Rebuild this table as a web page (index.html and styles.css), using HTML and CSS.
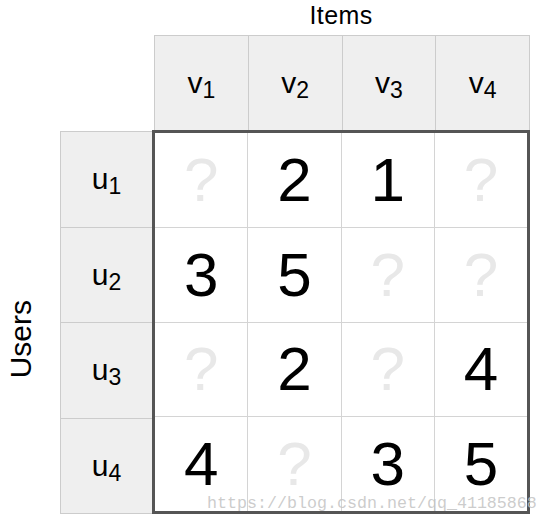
FILE: index.html
```html
<!DOCTYPE html>
<html>
<head>
<meta charset="utf-8">
<link rel="stylesheet" href="styles.css">
</head>
<body>
<div class="page">
  <div class="items-title">Items</div>
  <div class="col-heads">
    <div class="head"><span class="lbl">v<span class="sub">1</span></span></div>
    <div class="head"><span class="lbl">v<span class="sub">2</span></span></div>
    <div class="head"><span class="lbl">v<span class="sub">3</span></span></div>
    <div class="head"><span class="lbl">v<span class="sub">4</span></span></div>
  </div>
  <div class="users-area"><div class="users-title">Users</div></div>
  <div class="row-heads">
    <div class="rhead"><span class="lbl">u<span class="sub">1</span></span></div>
    <div class="rhead"><span class="lbl">u<span class="sub">2</span></span></div>
    <div class="rhead"><span class="lbl">u<span class="sub">3</span></span></div>
    <div class="rhead"><span class="lbl">u<span class="sub">4</span></span></div>
  </div>
  <div class="matrix">
    <div class="cell q">?</div><div class="cell">2</div><div class="cell">1</div><div class="cell q">?</div>
    <div class="cell">3</div><div class="cell">5</div><div class="cell q">?</div><div class="cell q">?</div>
    <div class="cell q">?</div><div class="cell">2</div><div class="cell q">?</div><div class="cell">4</div>
    <div class="cell">4</div><div class="cell q">?</div><div class="cell">3</div><div class="cell">5</div>
  </div>
</div>
<div class="watermark">https://blog.csdn.net/qq_41185868</div>
</body>
</html>
```
FILE: styles.css
```css
html, body {
  margin: 0;
  padding: 0;
  background: #ffffff;
}
body {
  width: 548px;
  height: 525px;
  position: relative;
  overflow: hidden;
  font-family: "Liberation Sans", Arial, sans-serif;
  color: #000;
}
.page {
  display: grid;
  grid-template-columns: 60px 92px 378px;
  grid-template-rows: 35px 95px 384px;
}
.items-title {
  grid-column: 3;
  grid-row: 1;
  text-align: center;
  font-size: 25px;
  line-height: 25px;
  margin-top: 3px;
  letter-spacing: 0.4px;
}
.col-heads {
  grid-column: 3;
  grid-row: 2;
  margin-left: 2px;
  display: grid;
  grid-template-columns: repeat(4, 1fr);
  border-top: 1px solid #cccccc;
  border-left: 1px solid #cccccc;
  background: #efefef;
}
.head {
  border-right: 1px solid #cccccc;
  display: flex;
  align-items: center;
  justify-content: center;
  font-size: 30px;
}
.lbl {
  display: block;
  line-height: 34px;
}
.sub {
  font-size: 23px;
  line-height: 0;
  vertical-align: -5px;
}
.users-area {
  grid-column: 1;
  grid-row: 3;
  display: flex;
  align-items: center;
  padding-left: 6px;
  padding-top: 34px;
}
.users-title {
  writing-mode: vertical-rl;
  transform: rotate(180deg);
  font-size: 30px;
  line-height: 30px;
}
.row-heads {
  grid-column: 2;
  grid-row: 3;
  margin-top: 1px;
  display: grid;
  grid-template-rows: repeat(4, 1fr);
  border-top: 1px solid #cccccc;
  border-left: 1px solid #cccccc;
  background: #efefef;
}
.rhead {
  border-bottom: 1px solid #cccccc;
  display: flex;
  align-items: center;
  justify-content: center;
  font-size: 30px;
}
.matrix {
  grid-column: 3;
  grid-row: 3;
  border: 3px solid #555555;
  display: grid;
  grid-template-columns: repeat(4, 1fr);
  grid-template-rows: repeat(4, 1fr);
  gap: 1px;
  background: #d4d4d4;
}
.cell {
  background: #ffffff;
  display: flex;
  align-items: center;
  justify-content: center;
  font-size: 62px;
  line-height: 1;
}
.cell.q {
  color: #e8e8e8;
}
.watermark {
  position: absolute;
  left: 207px;
  top: 496px;
  font-family: "Liberation Mono", "Courier New", monospace;
  font-size: 16.67px;
  line-height: 16.67px;
  color: rgba(195, 195, 195, 0.85);
  white-space: nowrap;
}
```
